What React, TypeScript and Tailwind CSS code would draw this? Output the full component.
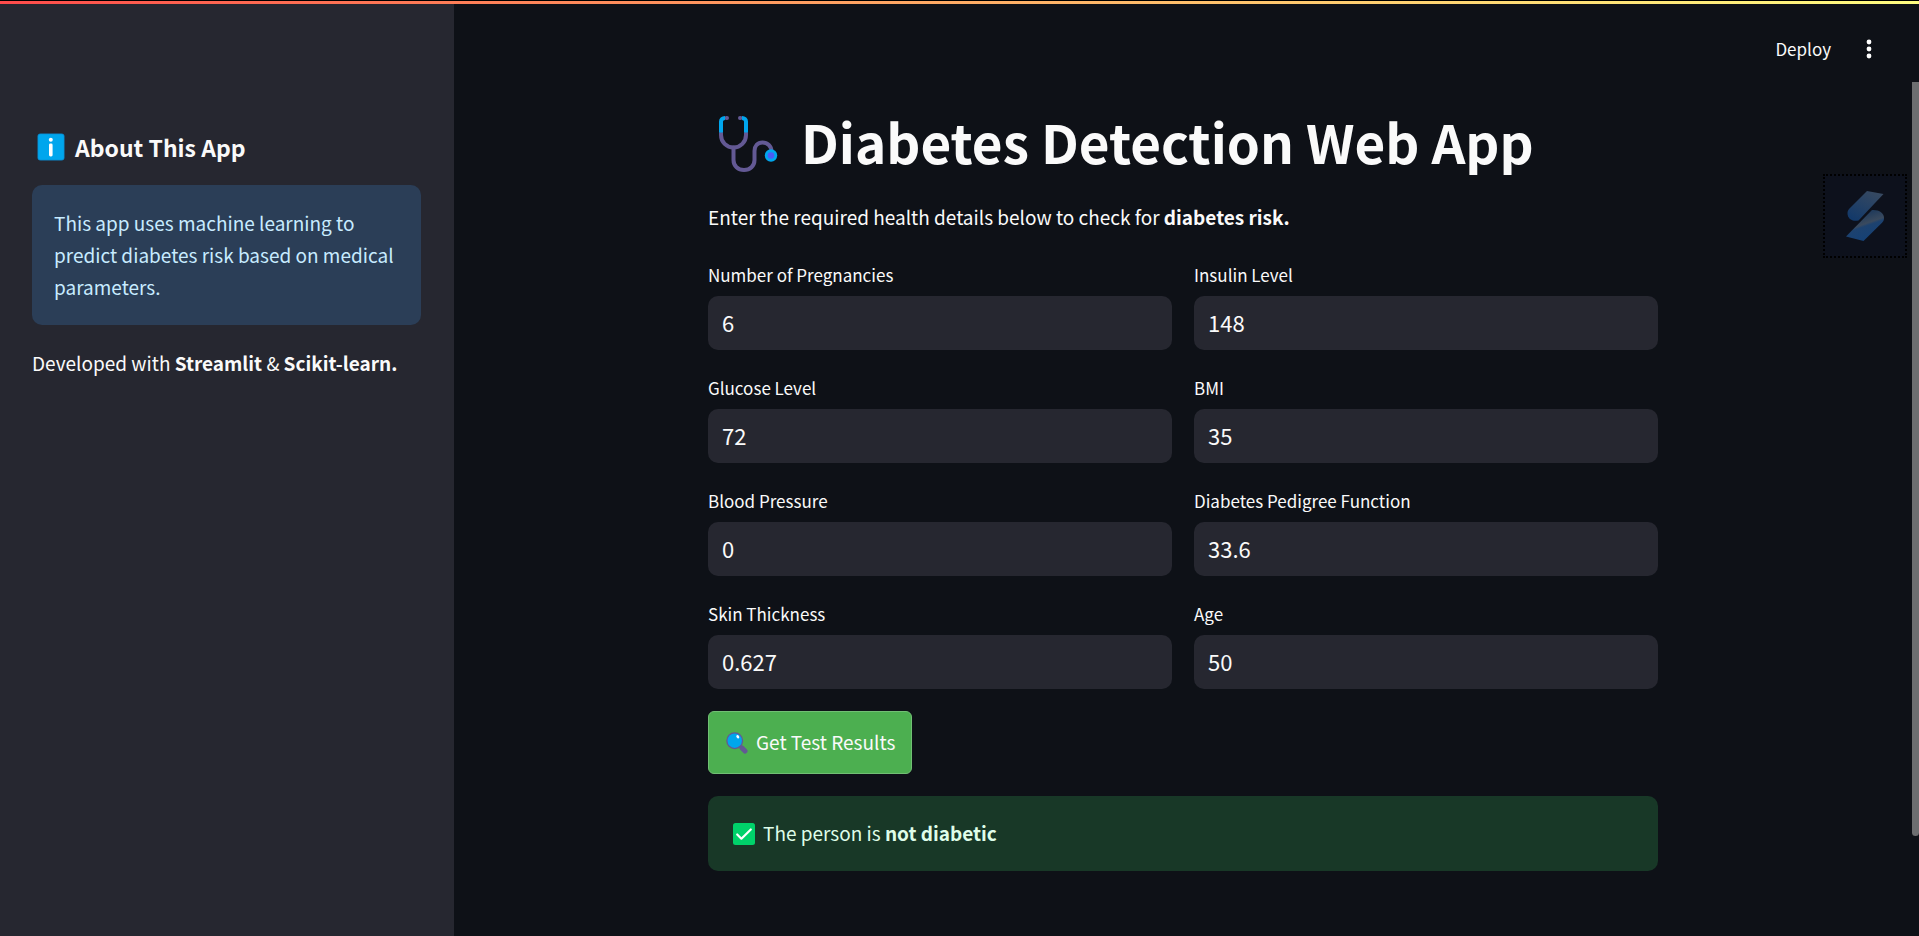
import React from "react";

type Field = { id: string; label: string; value: string };

const fields: Field[] = [
  { id: "pregnancies", label: "Number of Pregnancies", value: "6" },
  { id: "insulin", label: "Insulin Level", value: "148" },
  { id: "glucose", label: "Glucose Level", value: "72" },
  { id: "bmi", label: "BMI", value: "35" },
  { id: "pressure", label: "Blood Pressure", value: "0" },
  { id: "pedigree", label: "Diabetes Pedigree Function", value: "33.6" },
  { id: "skin", label: "Skin Thickness", value: "0.627" },
  { id: "age", label: "Age", value: "50" },
];

function InfoIcon() {
  return (
    <svg viewBox="0 0 28 28" className="size-7 shrink-0" aria-hidden="true">
      <rect x="0.5" y="0.5" width="27" height="27" rx="3" fill="#0a85c8" />
      <rect x="1.2" y="1.2" width="25.6" height="25.6" rx="2.5" fill="#00a6ed" />
      <circle cx="13.8" cy="6.8" r="2" fill="#fff" />
      <rect x="12" y="10.5" width="3.6" height="13" rx="1.4" fill="#fff" />
    </svg>
  );
}

function StethoscopeIcon() {
  return (
    <svg viewBox="0 0 60 58" className="h-[58px] w-[60px] shrink-0" fill="none" aria-hidden="true">
      <g strokeWidth="4" strokeLinecap="round">
        <path d="M3 18v2c0 7 5.500 12.500 12.500 12.500S28 27 28 20v-2" stroke="#635994" />
        <path d="M15.500 32.500v12.500c0 6 4.500 10 10.500 10s10.500-4 10.500-10V36c0-5 3-8.500 8-8.500s9 3.500 9 9v2" stroke="#635994" />
        <path d="M8.500 3H9M22 3h.5" stroke="#635994" />
      </g>
      <path d="M3 17.500V6.500C3 4.500 4.500 3 7 3M28 17.500V6.500C28 4.500 26.500 3 24 3" stroke="#00a6ed" strokeWidth="4" />
      <circle cx="53" cy="40.500" r="6.200" fill="#00a6ed" />
      <circle cx="53" cy="40.500" r="3.300" fill="#4a5cf5" />
    </svg>
  );
}

function SearchIcon() {
  return (
    <svg viewBox="0 0 22 22" className="size-[22px] shrink-0" aria-hidden="true">
      <path d="M13 13l3 3" stroke="#635994" strokeWidth="2.500" />
      <path d="M16 16l3 3" stroke="#635994" strokeWidth="5" strokeLinecap="round" />
      <circle cx="8.700" cy="8.700" r="8.500" fill="#635994" />
      <circle cx="8.700" cy="8.700" r="7.200" fill="#00a6ed" />
      <ellipse cx="11.800" cy="4.800" rx="1.300" ry="1.800" transform="rotate(-35 11.8 4.8)" fill="#fff" />
    </svg>
  );
}

function CheckIcon() {
  return (
    <svg viewBox="0 0 22 22" className="size-[22px] shrink-0" aria-hidden="true">
      <rect width="22" height="22" rx="2.500" fill="#00d26a" />
      <path d="M4.200 11.500l4.200 4.200 9.400-9.200" fill="none" stroke="#fff" strokeWidth="2.200" strokeLinecap="round" strokeLinejoin="round" />
    </svg>
  );
}

function FloatingLogo() {
  return (
    <svg viewBox="0 0 38 50" className="h-[50px] w-[38px]" aria-hidden="true">
      <defs>
        <linearGradient id="upper" x1="0.8" y1="0" x2="0.2" y2="1">
          <stop offset="0" stopColor="#384a61" />
          <stop offset="1" stopColor="#12396a" />
        </linearGradient>
        <linearGradient id="lower" x1="0.3" y1="0.2" x2="0.6" y2="0.9">
          <stop offset="0" stopColor="#213b5b" />
          <stop offset="0.4" stopColor="#3a4a5e" />
          <stop offset="0.500" stopColor="#1d426f" />
          <stop offset="1" stopColor="#164175" />
        </linearGradient>
      </defs>
      <path d="M21 0l16.500 3L12.500 29.500C6 31 1.500 27.500 1.500 22c0-2 .8-3.200 2-4.500z" fill="url(#upper)" />
      <path d="M26 19c7-.5 12 3 12 8 0 2-.8 3.500-2 4.800L17.500 50 0 45.500z" fill="url(#lower)" />
    </svg>
  );
}

export default function App() {
  return (
    <div className="flex min-h-screen flex-col bg-[#0e1117] font-['Noto_Sans_CJK_SC',sans-serif] text-[#fafafa]">
      <div className="h-1 border-t border-black bg-linear-to-r from-[#ff4b4b] to-[#fffd80]" />
      <div className="flex grow">
        <aside className="w-[454px] shrink-0 bg-[#262730] px-8 pt-[125px]">
          <h2 className="flex items-center gap-2.5 pl-[5px] text-[23px] leading-9 font-bold">
            <InfoIcon />
            About This App
          </h2>
          <p className="mt-5 mr-px rounded-[10px] bg-[#2b3e57] p-[22px] text-[19px] leading-8 text-[#c7ebff]">
            This app uses machine learning to predict diabetes risk based on medical parameters.
          </p>
          <p className="mt-[22px] text-[19px] leading-8">
            Developed with <strong>Streamlit</strong> &amp; <strong>Scikit-learn.</strong>
          </p>
        </aside>

        <div className="relative flex grow flex-col">
          <header className="flex h-[78px] items-center justify-end gap-6 pt-3 pr-9 text-[17px] leading-8">
            <button type="button">Deploy</button>
            <button type="button" aria-label="Main menu" className="flex w-7 justify-center">
              <svg viewBox="0 0 6 20" className="h-5 w-1.5" fill="#fff" aria-hidden="true">
                <circle cx="3" cy="3" r="2.400" />
                <circle cx="3" cy="10" r="2.400" />
                <circle cx="3" cy="17" r="2.400" />
              </svg>
            </button>
          </header>

          <div className="flex grow">
            <main className="grow">
              <div className="mx-auto flex max-w-[950px] flex-col gap-[22px]">
                <div>
                  <h1 className="flex items-end gap-[23px] pt-[27px] pl-2.5 text-[53px] leading-[64px] font-bold">
                    <StethoscopeIcon />
                    Diabetes Detection Web App
                  </h1>
                  <p className="mt-7 pb-1 text-[19px] leading-8">
                    Enter the required health details below to check for <strong>diabetes risk.</strong>
                  </p>
                </div>
                <form className="flex flex-col items-start gap-[22px]">
                  <div className="grid w-full grid-cols-2 gap-[22px]">
                    {fields.map((f) => (
                      <div key={f.id} className="flex flex-col">
                        <label htmlFor={f.id} className="pb-[5px] text-[17px] leading-8">
                          {f.label}
                        </label>
                        <input
                          id={f.id}
                          type="text"
                          defaultValue={f.value}
                          className="h-[54px] w-full rounded-[10px] bg-[#262730] px-3.5 pb-0.5 text-[22px] outline-none"
                        />
                      </div>
                    ))}
                  </div>
                  <button
                    type="button"
                    className="flex h-[63px] items-center gap-2 rounded-md border border-[#71bf74] bg-[#4caf50] pr-4 pl-[17px] text-[19px]"
                  >
                    <SearchIcon />
                    Get Test Results
                  </button>
                </form>
                <div role="status" className="flex h-[75px] items-center gap-2 rounded-[10px] bg-[#183827] px-[25px] text-[19px] text-[#dffde9]">
                  <CheckIcon />
                  <p>
                    The person is <strong>not diabetic</strong>
                  </p>
                </div>
              </div>
            </main>
            <div className="w-[7px] shrink-0 pb-[100px]" aria-hidden="true">
              <div className="h-full rounded-b-sm bg-[#6d6e70]" />
            </div>
          </div>

          <div className="absolute top-[170px] right-3 flex size-[84px] items-center justify-center border-2 border-dotted border-black bg-[#0d111c]">
            <FloatingLogo />
          </div>
        </div>
      </div>
    </div>
  );
}
